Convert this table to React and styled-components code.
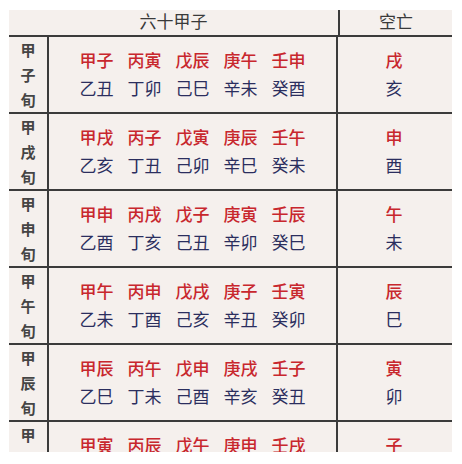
import React from "react";
import styled, { createGlobalStyle } from "styled-components";

const Global = createGlobalStyle`
  html, body { margin: 0; padding: 0; background: #ffffff; }
  body { font-family: "Noto Sans CJK SC", "Noto Sans", sans-serif; }
`;

const Table = styled.div`
  margin: 10px 0 0 9px;
  width: 443px;
  height: 442px;
  overflow: hidden;
  background: #f5f0ed;
  display: flex;
  flex-direction: column;
`;

const HeaderRow = styled.div`
  display: flex;
  height: 25px;
  flex: none;
  border-bottom: 2px solid #3b3b3b;
`;

const HeaderCell = styled.div`
  width: ${(p) => p.$w}px;
  flex: none;
  text-align: center;
  padding-top: 1px;
  box-sizing: border-box;
  font-size: 17px;
  line-height: 20px;
  color: #3a3a3a;
  border-right: ${(p) => (p.$divider ? "2px solid #3b3b3b" : "none")};
`;

const Row = styled.div`
  display: flex;
  height: 75px;
  flex: none;
  border-bottom: 2px solid #3b3b3b;
`;

const LabelCell = styled.div`
  width: 38px;
  flex: none;
  border-right: 2px solid #3b3b3b;
  display: flex;
  flex-direction: column;
  align-items: center;
  justify-content: center;
  font-size: 15px;
  font-weight: 700;
  line-height: 25px;
  color: #454545;
`;

const ContentCell = styled.div`
  width: 289px;
  flex: none;
  border-right: 2px solid #3b3b3b;
  display: flex;
  flex-direction: column;
  align-items: center;
  justify-content: center;
  padding-bottom: 2px;
  box-sizing: border-box;
`;

const Line = styled.div`
  display: flex;
  gap: 14px;
  height: 28px;
  align-items: center;
  font-size: 17px;
  line-height: 28px;
  color: ${(p) => (p.$red ? "#c8272d" : "#2b2e5e")};
  font-weight: ${(p) => (p.$red ? 500 : 400)};
`;

const Pair = styled.span`
  white-space: nowrap;
`;

const VoidCell = styled.div`
  width: 112px;
  flex: none;
  display: flex;
  flex-direction: column;
  align-items: center;
  justify-content: center;
  padding-bottom: 2px;
  box-sizing: border-box;
`;

const rows = [
  {
    label: "甲子旬",
    yang: ["甲子", "丙寅", "戊辰", "庚午", "壬申"],
    yin: ["乙丑", "丁卯", "己巳", "辛未", "癸酉"],
    v: ["戌", "亥"],
  },
  {
    label: "甲戌旬",
    yang: ["甲戌", "丙子", "戊寅", "庚辰", "壬午"],
    yin: ["乙亥", "丁丑", "己卯", "辛巳", "癸未"],
    v: ["申", "酉"],
  },
  {
    label: "甲申旬",
    yang: ["甲申", "丙戌", "戊子", "庚寅", "壬辰"],
    yin: ["乙酉", "丁亥", "己丑", "辛卯", "癸巳"],
    v: ["午", "未"],
  },
  {
    label: "甲午旬",
    yang: ["甲午", "丙申", "戊戌", "庚子", "壬寅"],
    yin: ["乙未", "丁酉", "己亥", "辛丑", "癸卯"],
    v: ["辰", "巳"],
  },
  {
    label: "甲辰旬",
    yang: ["甲辰", "丙午", "戊申", "庚戌", "壬子"],
    yin: ["乙巳", "丁未", "己酉", "辛亥", "癸丑"],
    v: ["寅", "卯"],
  },
  {
    label: "甲寅旬",
    yang: ["甲寅", "丙辰", "戊午", "庚申", "壬戌"],
    yin: ["乙卯", "丁巳", "己未", "辛酉", "癸亥"],
    v: ["子", "丑"],
  },
];

export default function App() {
  return (
    <>
      <Global />
      <Table>
        <HeaderRow>
          <HeaderCell $w={331} $divider>六十甲子</HeaderCell>
          <HeaderCell $w={112}>空亡</HeaderCell>
        </HeaderRow>
        {rows.map((r) => (
          <Row key={r.label}>
            <LabelCell>
              {r.label.split("").map((c, i) => (
                <span key={i}>{c}</span>
              ))}
            </LabelCell>
            <ContentCell>
              <Line $red>
                {r.yang.map((p) => (
                  <Pair key={p}>{p}</Pair>
                ))}
              </Line>
              <Line>
                {r.yin.map((p) => (
                  <Pair key={p}>{p}</Pair>
                ))}
              </Line>
            </ContentCell>
            <VoidCell>
              <Line $red>{r.v[0]}</Line>
              <Line>{r.v[1]}</Line>
            </VoidCell>
          </Row>
        ))}
      </Table>
    </>
  );
}
